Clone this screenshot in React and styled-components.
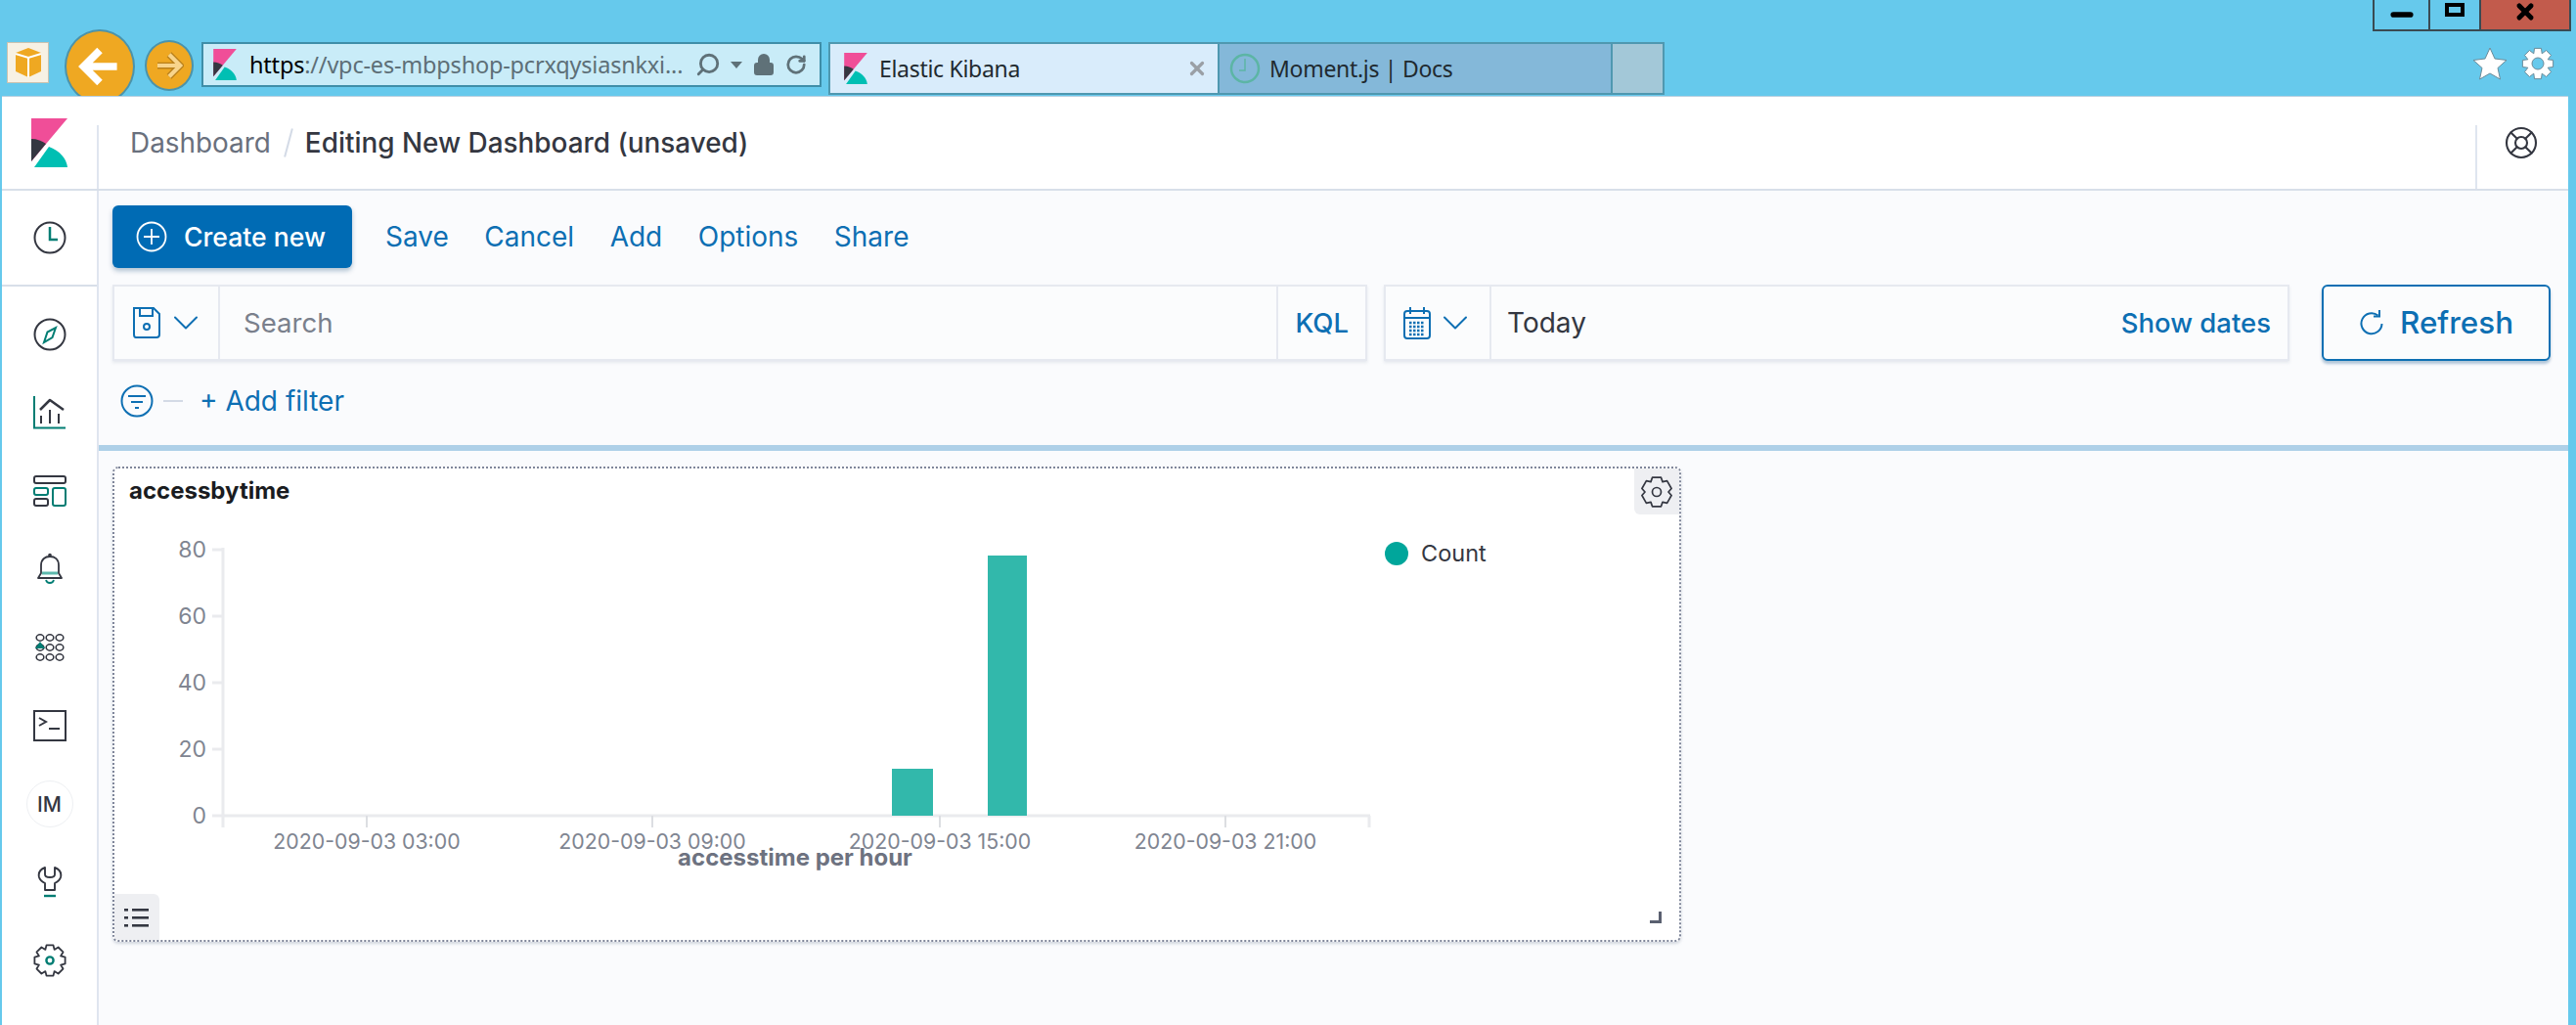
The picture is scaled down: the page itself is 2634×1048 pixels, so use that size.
import React from "react";
import styled, { createGlobalStyle } from "styled-components";
import { ChevronDown, LifeBuoy, RotateCw, Search as SearchGlyph, Lock, X, Minus } from "lucide-react";

const GlobalStyle = createGlobalStyle`
  html, body {
    margin: 0;
    padding: 0;
    background: #66c9ec;
  }
  body {
    font-family: Inter, "Liberation Sans", sans-serif;
    overflow: hidden;
  }
`;

const Page = styled.div`
  display: flex;
  flex-direction: column;
  width: 2634px;
  height: 1048px;
  overflow: hidden;
`;

/* browser chrome */
const Chrome = styled.div`
  display: flex;
  height: 98px;
  flex: none;
  overflow: hidden;
  font-family: "Noto Sans", sans-serif;
`;
const NavGroup = styled.div`
  display: flex;
  align-items: flex-start;
  padding: 43px 0 0 7px;
`;
const HomeTile = styled.div`
  display: flex;
  align-items: center;
  justify-content: center;
  width: 43px;
  height: 42px;
  background: #f7f1e4;
  border: 1px solid #c9c2b0;
  box-sizing: border-box;
`;
const BackCircle = styled.div`
  display: flex;
  align-items: center;
  justify-content: center;
  width: 72px;
  height: 76px;
  margin: -13px 0 0 16px;
  border-radius: 50%;
  background: #efa822;
  border: 2px solid #4b93ab;
  box-sizing: border-box;
`;
const ForwardCircle = styled.div`
  display: flex;
  align-items: center;
  justify-content: center;
  width: 50px;
  height: 52px;
  margin: -2px 0 0 10px;
  border-radius: 50%;
  background: #efa822;
  border: 2px solid #4b93ab;
  box-sizing: border-box;
`;
const UrlBar = styled.div`
  display: flex;
  align-items: center;
  width: 634px;
  height: 46px;
  margin-left: 8px;
  padding: 0 10px 0 10px;
  background: #c9ecf8;
  border: 2px solid #3f8ea8;
  box-sizing: border-box;
`;
const UrlText = styled.div`
  margin-left: 13px;
  width: 447px;
  font-size: 23.5px;
  line-height: 30px;
  white-space: nowrap;
  color: #5d6f77;
  letter-spacing: -0.2px;
  b {
    font-weight: 400;
    color: #000;
  }
`;
const UrlTools = styled.div`
  display: flex;
  align-items: center;
  gap: 10px;
  margin-left: 9px;
  color: #5f7178;
`;
const Caret = styled.div`
  width: 0;
  height: 0;
  border-left: 6px solid transparent;
  border-right: 6px solid transparent;
  border-top: 7px solid #5f7178;
`;
const TabStrip = styled.div`
  display: flex;
  margin-left: 7px;
  padding-top: 43px;
`;
const Tab = styled.div`
  display: flex;
  align-items: center;
  width: ${(p) => p.$width}px;
  height: 54px;
  padding-left: ${(p) => p.$pad}px;
  background: ${(p) => p.$bg};
  border: 2px solid #4f98b0;
  border-left-width: ${(p) => (p.$first ? 2 : 0)}px;
  box-sizing: border-box;
  font-size: 23px;
  color: #1f2a30;
`;
const TabLabel = styled.span`
  margin-left: ${(p) => p.$gap}px;
  flex: 1;
  white-space: nowrap;
  letter-spacing: -0.3px;
`;
const TabClose = styled.span`
  display: flex;
  margin-right: 10px;
  color: #9a9fa5;
`;
const RightTools = styled.div`
  display: flex;
  flex-direction: column;
  align-items: flex-end;
  margin-left: auto;
  padding-right: 5px;
`;
const WindowButtons = styled.div`
  display: flex;
  height: 32px;
  border: 2px solid #3a4a52;
  border-top: 0;
  box-sizing: border-box;
`;
const WindowButton = styled.div`
  display: flex;
  align-items: center;
  justify-content: center;
  width: ${(p) => p.$width}px;
  background: ${(p) => p.$bg || "transparent"};
  border-left: ${(p) => (p.$divided ? "2px solid #3a4a52" : "0")};
  box-sizing: border-box;
`;
const MaxGlyph = styled.div`
  width: 12px;
  height: 6px;
  margin-top: -10px;
  border: 4px solid #000;
  box-sizing: content-box;
`;
const BrowserTools = styled.div`
  display: flex;
  gap: 14px;
  align-items: center;
  margin: 16px 17px 0 0;
`;

/* kibana frame */
const Frame = styled.div`
  display: flex;
  flex-direction: column;
  flex: 1;
  min-height: 0;
  margin: 0 8px 0 2px;
  background: #fff;
  border-top: 1px solid #b8cfe0;
`;
const Header = styled.header`
  display: flex;
  align-items: center;
  flex: none;
  height: 96px;
  background: #fff;
  border-bottom: 2px solid #d8dfe9;
  box-sizing: border-box;
`;
const LogoCell = styled.div`
  display: flex;
  width: 97px;
  padding-left: 30px;
  box-sizing: border-box;
`;
const HeaderRule = styled.div`
  width: 2px;
  height: 65px;
  align-self: flex-end;
  background: #dfe5ef;
  flex: none;
`;
const Crumbs = styled.nav`
  display: flex;
  align-items: center;
  margin-left: 32px;
  font-size: 27.9px;
  white-space: nowrap;
`;
const CrumbLink = styled.span`
  color: #69707d;
`;
const CrumbSlash = styled.span`
  width: 2px;
  height: 30px;
  margin: 0 16px 0 17px;
  background: #d3dae6;
  transform: rotate(15deg);
`;
const CrumbCurrent = styled.span`
  color: #343741;
  font-weight: 500;
`;
const HelpCell = styled.div`
  display: flex;
  justify-content: center;
  width: 93px;
  padding-right: 3px;
  box-sizing: border-box;
  color: #343741;
`;
const HeaderSpacer = styled.div`
  flex: 1;
`;

const Body = styled.div`
  display: flex;
  flex: 1;
  min-height: 0;
`;
const Sidebar = styled.aside`
  display: flex;
  flex-direction: column;
  flex: none;
  width: 99px;
  background: #fff;
  border-right: 2px solid #dfe5ef;
  box-sizing: border-box;
`;
const RecentGroup = styled.div`
  display: flex;
  align-items: center;
  justify-content: center;
  height: 98px;
  border-bottom: 2px solid #d8dfe9;
  box-sizing: border-box;
`;
const SideList = styled.div`
  padding-top: 9px;
`;
const SideItem = styled.div`
  display: flex;
  align-items: center;
  justify-content: center;
  height: 80px;
`;
const Avatar = styled.div`
  display: flex;
  align-items: center;
  justify-content: center;
  width: 46px;
  height: 46px;
  border-radius: 50%;
  border: 1px solid #eef0f3;
  font-size: 21px;
  font-weight: 500;
  color: #343741;
`;

const Content = styled.main`
  display: flex;
  flex-direction: column;
  flex: 1;
  min-width: 0;
  background: #fafbfd;
`;
const Toolbar = styled.div`
  display: flex;
  flex-direction: column;
  padding: 15px 18px 0 14px;
  height: 260px;
  box-sizing: border-box;
  flex: none;
`;
const TopNav = styled.div`
  display: flex;
  align-items: center;
  gap: 36.5px;
  height: 64px;
`;
const CreateButton = styled.button`
  display: flex;
  align-items: center;
  gap: 17px;
  width: 245px;
  height: 64px;
  margin-right: -2.5px;
  padding: 0 0 0 24px;
  border: 0;
  border-radius: 6px;
  background: #006bb4;
  box-shadow: 0 3px 5px rgba(0, 60, 110, 0.3);
  color: #fff;
  font: 500 26.6px Inter, sans-serif;
  white-space: nowrap;
`;
const NavLink = styled.a`
  font-size: 28px;
  color: #0d6fb3;
  white-space: nowrap;
`;
const QueryRow = styled.div`
  display: flex;
  gap: 17px;
  margin-top: 17px;
  height: 78px;
`;
const QueryBox = styled.div`
  display: flex;
  align-items: center;
  flex: ${(p) => (p.$width ? "none" : "1")};
  width: ${(p) => (p.$width ? `${p.$width}px` : "auto")};
  background: #fbfcfd;
  border: 2px solid #e6e9f0;
  box-shadow: 0 2px 3px rgba(152, 162, 179, 0.2);
  box-sizing: border-box;
`;
const Prepend = styled.div`
  display: flex;
  align-items: center;
  align-self: stretch;
  gap: 3px;
  width: ${(p) => p.$width}px;
  padding-left: 18px;
  box-sizing: border-box;
  border-right: 2px solid #e6e9f0;
  color: #0d6fb3;
  flex: none;
`;
const SearchText = styled.div`
  flex: 1;
  padding-left: 24px;
  font-size: 27.6px;
  color: #7a808c;
`;
const TodayText = styled.div`
  flex: 1;
  padding-left: 16px;
  font-size: 28px;
  color: #343741;
`;
const Append = styled.div`
  display: flex;
  align-items: center;
  align-self: stretch;
  padding: 0 ${(p) => p.$pad}px;
  border-left: ${(p) => (p.$rule ? "2px solid #e6e9f0" : "0")};
  font-size: 27.5px;
  font-weight: 500;
  color: #0d6fb3;
  white-space: nowrap;
`;
const RefreshButton = styled.button`
  display: flex;
  align-items: center;
  justify-content: center;
  gap: 16px;
  flex: none;
  width: 234px;
  margin-left: 16px;
  border: 2px solid #0d6fb3;
  border-radius: 6px;
  background: #fbfcfd;
  box-shadow: 0 3px 3px rgba(0, 70, 130, 0.3);
  color: #0d6fb3;
  font: 500 31.4px Inter, sans-serif;
`;
const FilterRow = styled.div`
  display: flex;
  align-items: center;
  height: 80px;
  padding: 2px 0 0 8px;
  box-sizing: border-box;
  gap: 10px;
`;
const FilterDash = styled.div`
  width: 20px;
  height: 2px;
  margin: 0 7px 0 0;
  background: #d3dae6;
`;
const ContentRule = styled.div`
  height: 6px;
  flex: none;
  background: #aed0e8;
`;
const Panels = styled.div`
  flex: 1;
  padding: 16px 0 0 14px;
`;
const Panel = styled.section`
  position: relative;
  width: 1604px;
  height: 486px;
  background: #fff;
  border: 2px dotted #7f869a;
  border-radius: 6px;
  box-shadow: 0 2px 3px rgba(152, 162, 179, 0.4);
  box-sizing: border-box;
`;
const PanelTitle = styled.h3`
  height: 50px;
  margin: 0;
  padding-left: 15px;
  font-size: 24px;
  line-height: 46px;
  font-weight: 700;
  color: #1a1c21;
`;
const ChartSvg = styled.svg`
  display: block;
  width: 1600px;
  height: 432px;
  font-family: Inter, sans-serif;
`;
const CornerButton = styled.div`
  position: absolute;
  display: flex;
  align-items: center;
  justify-content: center;
  width: 46px;
  height: 47px;
  background: #eeeff2;
  ${(p) => (p.$pos === "top" ? "top: 0; right: 0; border-radius: 0 4px 0 6px;" : "bottom: 0; left: 0; border-radius: 0 6px 0 4px;")}
`;
const ResizeHandle = styled.div`
  position: absolute;
  right: 18px;
  bottom: 17px;
  width: 9px;
  height: 9px;
  border-right: 3px solid #5a6070;
  border-bottom: 3px solid #5a6070;
`;

const gearPath = (cx, cy, outer, inner, teeth) => {
  const step = (Math.PI * 2) / teeth;
  const pts = [];
  for (let i = 0; i < teeth; i++) {
    const a = i * step - Math.PI / 2;
    [
      [inner, -0.5],
      [outer, -0.28],
      [outer, 0.28],
      [inner, 0.5],
    ].forEach(([r, k]) => {
      const t = a + k * step;
      pts.push(`${(cx + r * Math.cos(t)).toFixed(2)} ${(cy + r * Math.sin(t)).toFixed(2)}`);
    });
  }
  return `M${pts.join("L")}Z`;
};

const KibanaLogo = ({ w = 37, h = 50 }) => (
  <svg width={w} height={h} viewBox="0 0 37 50">
    <path d="M0 0H37L0 44Z" fill="#f04e98" />
    <path d="M0 21C6 21 11 23 15 26L0 44Z" fill="#343741" />
    <path d="M3 50L18 29C29 33 36 41 37 50Z" fill="#00bfb3" />
  </svg>
);

const DARK = "#343741";
const TEAL = "#017d73";

const ClockIcon = () => (
  <svg width="34" height="34" viewBox="0 0 34 34" fill="none">
    <circle cx="17" cy="17" r="15.5" stroke={DARK} strokeWidth="2" />
    <path d="M17 6V19H25" stroke={TEAL} strokeWidth="2.5" />
  </svg>
);
const CompassIcon = () => (
  <svg width="34" height="34" viewBox="0 0 34 34" fill="none">
    <circle cx="17" cy="17" r="15.5" stroke={DARK} strokeWidth="2" />
    <path d="M23 10L19.5 20L11 25L14.5 14.5Z" stroke={TEAL} strokeWidth="2" />
  </svg>
);
const VisualizeIcon = () => (
  <svg width="34" height="34" viewBox="0 0 34 34" fill="none">
    <path d="M1 0V32.5H33" stroke={TEAL} strokeWidth="2" />
    <path d="M7 14L17 4L31 14" stroke={DARK} strokeWidth="2.5" strokeLinejoin="round" />
    <path d="M8 20V28M17 14V28M26 18V28" stroke={DARK} strokeWidth="2" />
  </svg>
);
const DashboardIcon = () => (
  <svg width="34" height="32" viewBox="0 0 34 32" fill="none">
    <rect x="1" y="1" width="32" height="7" rx="2" stroke={DARK} strokeWidth="2" />
    <rect x="1" y="13" width="14" height="7" rx="2" stroke={TEAL} strokeWidth="2" />
    <rect x="1" y="24" width="14" height="7" rx="2" stroke={DARK} strokeWidth="2" />
    <rect x="20" y="13" width="13" height="18" rx="2" stroke={TEAL} strokeWidth="2" />
  </svg>
);
const BellIcon = () => (
  <svg width="26" height="34" viewBox="0 0 26 34" fill="none">
    <path d="M4 21V13C4 7 8 4 13 4C18 4 22 7 22 13V21L25 26H1Z" stroke={DARK} strokeWidth="1.8" strokeLinejoin="round" />
    <circle cx="13" cy="2.5" r="1.8" fill={DARK} />
    <path d="M5 21H21" stroke="#5cb8ad" strokeWidth="3" />
    <path d="M9 28C10 32 16 32 17 28" stroke={TEAL} strokeWidth="1.8" />
  </svg>
);
const GridIcon = () => (
  <svg width="30" height="30" viewBox="0 0 30 30" fill="none" stroke={DARK} strokeWidth="1.6">
    {[5, 15, 25].map((x) =>
      [5, 15, 25].map((y) =>
        <ellipse key={`${x}-${y}`} cx={x} cy={y} rx="3.8" ry="3.2" />
      )
    )}
    <path d="M5 9L10 16H0Z" fill={TEAL} stroke="none" />
  </svg>
);
const ConsoleIcon = () => (
  <svg width="34" height="32" viewBox="0 0 34 32" fill="none">
    <rect x="1" y="1" width="32" height="30" stroke={DARK} strokeWidth="2" />
    <path d="M6 8L13 12L6 16" stroke={DARK} strokeWidth="2" />
    <path d="M16 19H27" stroke={DARK} strokeWidth="2" />
  </svg>
);
const WrenchIcon = () => (
  <svg width="26" height="34" viewBox="0 0 26 34" fill="none">
    <path
      d="M8 2C3 4 1 8 2 12C3 15 6 17 8 18V25H18V18C20 17 23 15 24 12C25 8 23 4 18 2V9C18 11 16 12 13 12C10 12 8 11 8 9Z"
      stroke={DARK}
      strokeWidth="1.9"
      strokeLinejoin="round"
    />
    <path d="M7 31H19" stroke={TEAL} strokeWidth="2.4" />
  </svg>
);
const GearIcon = () => (
  <svg width="34" height="34" viewBox="0 0 34 34" fill="none">
    <path d={gearPath(17, 17, 16, 12, 8)} stroke={DARK} strokeWidth="1.8" strokeLinejoin="round" />
    <circle cx="17" cy="17" r="3.6" stroke={TEAL} strokeWidth="2.4" />
  </svg>
);
const PanelGearIcon = () => (
  <svg width="32" height="34" viewBox="0 0 32 34" fill="none">
    <path d={gearPath(16, 17, 15.5, 12, 6)} stroke={DARK} strokeWidth="1.7" strokeLinejoin="round" />
    <circle cx="16" cy="17" r="4.5" stroke={DARK} strokeWidth="1.7" />
  </svg>
);
const ListIcon = () => (
  <svg width="26" height="22" viewBox="0 0 26 22" fill={DARK}>
    {[2, 10, 18].map((y) => (
      <g key={y}>
        <rect x="0" y={y} width="4" height="2.6" />
        <rect x="8" y={y} width="17" height="2.6" />
      </g>
    ))}
  </svg>
);
const SaveIcon = () => (
  <svg width="30" height="32" viewBox="0 0 30 32" fill="none" stroke="#0d6fb3" strokeWidth="2">
    <path d="M2 1H22L28 7V28C28 30 27 31 25 31H4C2.5 31 2 30 2 28Z" />
    <path d="M8 1V9H21V1" />
    <circle cx="15" cy="20" r="3" />
  </svg>
);
const CalendarIcon = () => (
  <svg width="28" height="34" viewBox="0 0 28 34" fill="none" stroke="#0d6fb3" strokeWidth="2">
    <rect x="1" y="5" width="26" height="28" rx="3" />
    <path d="M1 12H27M7 1V8M21 1V8" />
    <path d="M6 17H22M6 21H22M6 25H22M6 29H22" strokeWidth="2.5" strokeDasharray="2.5 1.5" />
  </svg>
);
const FilterIcon = () => (
  <svg width="34" height="34" viewBox="0 0 34 34" fill="none" stroke="#0d6fb3" strokeWidth="2">
    <circle cx="17" cy="17" r="15.5" />
    <path d="M8 12H26M11 18H23M15 24H19" />
  </svg>
);
const PlusCircleIcon = () => (
  <svg width="32" height="32" viewBox="0 0 32 32" fill="none" stroke="#fff" strokeWidth="1.8">
    <circle cx="16" cy="16" r="14.5" />
    <path d="M16 8V24M8 16H24" />
  </svg>
);
const RefreshIcon = () => (
  <svg width="26" height="28" viewBox="0 0 26 28" fill="none" stroke="#0d6fb3" strokeWidth="2">
    <path d="M19.5 6.5A10.5 10.5 0 1 0 23.5 15" />
    <path d="M21 1V7.5H15" />
  </svg>
);
const BoxIcon = () => (
  <svg width="28" height="32" viewBox="0 0 28 32">
    <path d="M14 1L27 6V25L14 31L1 25V6Z" fill="#efa822" />
    <path d="M1 7L14 11L27 7M14 11V31" stroke="#fff" strokeWidth="2" fill="none" />
  </svg>
);
const BackArrow = () => (
  <svg width="44" height="44" viewBox="0 0 40 40" fill="none">
    <path d="M36 20H6M20 5L5 20L20 35" stroke="#fff" strokeWidth="7" />
  </svg>
);
const ForwardArrow = () => (
  <svg width="30" height="30" viewBox="0 0 40 40" fill="none">
    <path d="M4 20H34M20 5L35 20L20 35" stroke="#b9801c" strokeWidth="9" />
    <path d="M4 20H34M20 5L35 20L20 35" stroke="#f8d48b" strokeWidth="5.5" />
  </svg>
);
const StarIcon = () => (
  <svg width="36" height="34" viewBox="0 0 36 34">
    <path d="M18 1L23 12L35 13.5L26 21.5L28.5 33L18 27L7.5 33L10 21.5L1 13.5L13 12Z" fill="#fff" stroke="#6b8b99" strokeWidth="1" strokeLinejoin="round" />
  </svg>
);
const BrowserGearIcon = () => (
  <svg width="34" height="34" viewBox="0 0 34 34">
    <path d={gearPath(17, 17, 16, 11, 8)} fill="#fff" stroke="#6b8b99" strokeLinejoin="round" />
    <circle cx="17" cy="17" r="6" fill="#66c9ec" stroke="#6b8b99" />
  </svg>
);
const FadedClock = () => (
  <svg width="32" height="32" viewBox="0 0 32 32" fill="none" stroke="#5cb5a5" strokeWidth="2.5">
    <circle cx="16" cy="16" r="14" />
    <path d="M16 6V18H10" strokeWidth="1.5" />
  </svg>
);

const yTicks = [
  { label: "80", y: 562 },
  { label: "60", y: 630 },
  { label: "40", y: 698 },
  { label: "20", y: 766 },
  { label: "0", y: 834 },
];
const xTicks = [
  { label: "2020-09-03 03:00", x: 375 },
  { label: "2020-09-03 09:00", x: 667 },
  { label: "2020-09-03 15:00", x: 961 },
  { label: "2020-09-03 21:00", x: 1253 },
];
const bars = [
  { x: 912, w: 42, y: 786 },
  { x: 1010, w: 40, y: 568 },
];

const Chart = () => (
  <ChartSvg viewBox="117 529 1600 432">
    <path d="M228 560V846M227 834H1401M1400 834V846" stroke="#eaebee" strokeWidth="3" fill="none" />
    {yTicks.map((t) => (
      <g key={t.label}>
        <path d={`M217 ${t.y}H228`} stroke="#eaebee" strokeWidth="3" />
        <text x="211" y={t.y + 8} textAnchor="end" fontSize="23" fill="#7f8591">
          {t.label}
        </text>
      </g>
    ))}
    {xTicks.map((t) => (
      <g key={t.label}>
        <path d={`M${t.x} 834V846`} stroke="#dcdee2" strokeWidth="2" />
        <text x={t.x} y={868} textAnchor="middle" fontSize="21.3" fill="#7f8591">
          {t.label}
        </text>
      </g>
    ))}
    <text x="813" y="885" textAnchor="middle" fontSize="24" fontWeight="700" fill="#6d7280">
      accesstime per hour
    </text>
    {bars.map((b) => (
      <rect key={b.x} x={b.x} y={b.y} width={b.w} height={834 - b.y} fill="#32b8ab" />
    ))}
    <circle cx="1428" cy="566" r="12" fill="#00a69b" />
    <text x="1453" y="574" fontSize="23.5" fill="#343741">
      Count
    </text>
  </ChartSvg>
);

const sideItems = [
  <CompassIcon />,
  <VisualizeIcon />,
  <DashboardIcon />,
  <BellIcon />,
  <GridIcon />,
  <ConsoleIcon />,
  <Avatar>IM</Avatar>,
  <WrenchIcon />,
  <GearIcon />,
];

export default function App() {
  return (
    <Page>
      <GlobalStyle />
      <Chrome>
        <NavGroup>
          <HomeTile>
            <BoxIcon />
          </HomeTile>
          <BackCircle>
            <BackArrow />
          </BackCircle>
          <ForwardCircle>
            <ForwardArrow />
          </ForwardCircle>
          <UrlBar>
            <KibanaLogo w={24} h={32} />
            <UrlText>
              <b>https</b>://vpc-es-mbpshop-pcrxqysiasnkxi...
            </UrlText>
            <UrlTools>
              <SearchGlyph size={26} strokeWidth={2.6} style={{ transform: "scaleX(-1)" }} />
              <Caret />
              <Lock size={24} fill="#5f7178" />
              <RotateCw size={22} strokeWidth={3} />
            </UrlTools>
          </UrlBar>
        </NavGroup>
        <TabStrip>
          <Tab $width={400} $pad={14} $bg="#d9ecfb" $first>
            <KibanaLogo w={24} h={32} />
            <TabLabel $gap={12}>Elastic Kibana</TabLabel>
            <TabClose>
              <X size={22} strokeWidth={3.5} />
            </TabClose>
          </Tab>
          <Tab $width={402} $pad={10} $bg="#84b8d9">
            <FadedClock />
            <TabLabel $gap={9}>Moment.js | Docs</TabLabel>
          </Tab>
          <Tab $width={53} $pad={0} $bg="#a3c8d8" />
        </TabStrip>
        <RightTools>
          <WindowButtons>
            <WindowButton $width={55}>
              <Minus size={30} strokeWidth={4.5} color="#000" />
            </WindowButton>
            <WindowButton $width={52} $divided>
              <MaxGlyph />
            </WindowButton>
            <WindowButton $width={92} $divided $bg="#c25b4c">
              <X size={24} strokeWidth={5} color="#000" style={{ marginTop: -6 }} />
            </WindowButton>
          </WindowButtons>
          <BrowserTools>
            <StarIcon />
            <BrowserGearIcon />
          </BrowserTools>
        </RightTools>
      </Chrome>
      <Frame>
        <Header>
          <LogoCell>
            <KibanaLogo />
          </LogoCell>
          <HeaderRule />
          <Crumbs>
            <CrumbLink>Dashboard</CrumbLink>
            <CrumbSlash />
            <CrumbCurrent>Editing New Dashboard (unsaved)</CrumbCurrent>
          </Crumbs>
          <HeaderSpacer />
          <HeaderRule />
          <HelpCell>
            <LifeBuoy size={36} strokeWidth={1.4} />
          </HelpCell>
        </Header>
        <Body>
          <Sidebar>
            <RecentGroup>
              <ClockIcon />
            </RecentGroup>
            <SideList>
              {sideItems.map((icon, i) => (
                <SideItem key={i}>{icon}</SideItem>
              ))}
            </SideList>
          </Sidebar>
          <Content>
            <Toolbar>
              <TopNav>
                <CreateButton>
                  <PlusCircleIcon />
                  Create new
                </CreateButton>
                <NavLink>Save</NavLink>
                <NavLink>Cancel</NavLink>
                <NavLink>Add</NavLink>
                <NavLink>Options</NavLink>
                <NavLink>Share</NavLink>
              </TopNav>
              <QueryRow>
                <QueryBox>
                  <Prepend $width={108}>
                    <SaveIcon />
                    <ChevronDown size={44} strokeWidth={1.1} />
                  </Prepend>
                  <SearchText>Search</SearchText>
                  <Append $pad={17} $rule>
                    KQL
                  </Append>
                </QueryBox>
                <QueryBox $width={926}>
                  <Prepend $width={108}>
                    <CalendarIcon />
                    <ChevronDown size={44} strokeWidth={1.1} />
                  </Prepend>
                  <TodayText>Today</TodayText>
                  <Append $pad={17}>Show dates</Append>
                </QueryBox>
                <RefreshButton>
                  <RefreshIcon />
                  Refresh
                </RefreshButton>
              </QueryRow>
              <FilterRow>
                <FilterIcon />
                <FilterDash />
                <NavLink>+ Add filter</NavLink>
              </FilterRow>
            </Toolbar>
            <ContentRule />
            <Panels>
              <Panel>
                <PanelTitle>accessbytime</PanelTitle>
                <Chart />
                <CornerButton $pos="top">
                  <PanelGearIcon />
                </CornerButton>
                <CornerButton $pos="bottom">
                  <ListIcon />
                </CornerButton>
                <ResizeHandle />
              </Panel>
            </Panels>
          </Content>
        </Body>
      </Frame>
    </Page>
  );
}
